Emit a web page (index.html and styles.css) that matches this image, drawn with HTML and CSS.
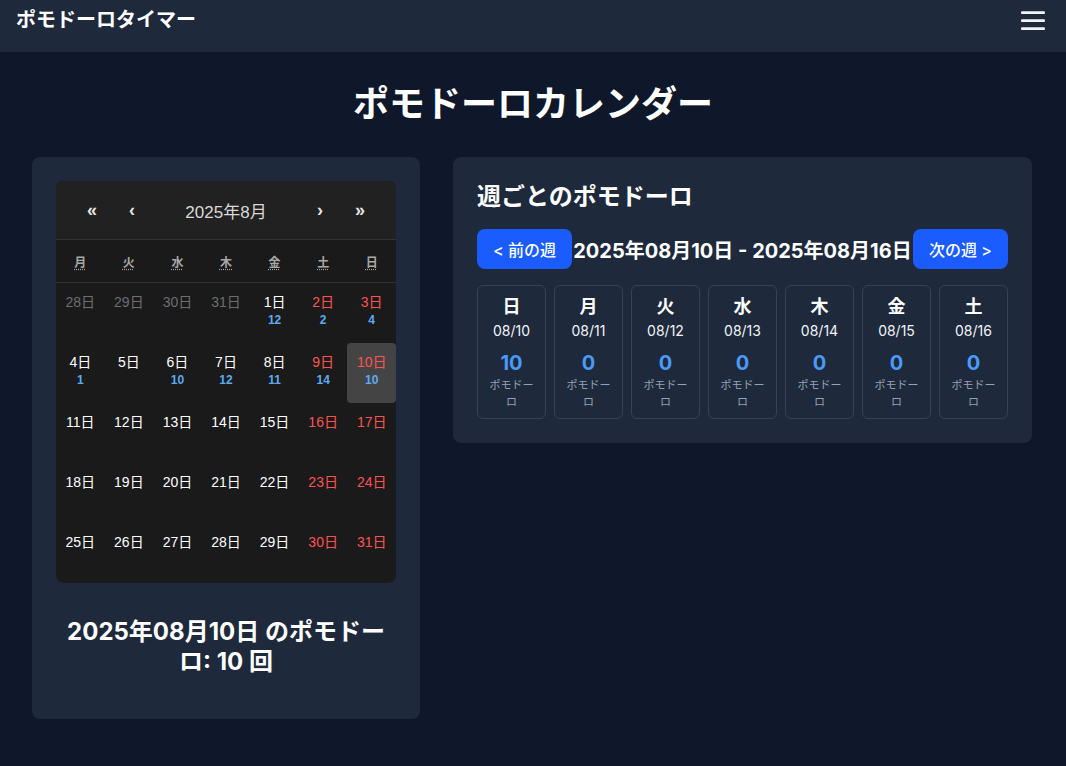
FILE: index.html
```html
<!DOCTYPE html>
<html lang="ja">
<head>
<meta charset="utf-8">
<title>ポモドーロカレンダー</title>
<link rel="stylesheet" href="styles.css">
</head>
<body>
<header class="topbar">
  <h1 class="brand">ポモドーロタイマー</h1>
  <button class="menu" aria-label="メニュー">
    <svg width="24" height="24" viewBox="0 0 24 24" fill="none" stroke="currentColor" stroke-width="2.6" stroke-linecap="round">
      <line x1="1" y1="4.6" x2="23" y2="4.6"/>
      <line x1="1" y1="12.6" x2="23" y2="12.6"/>
      <line x1="1" y1="20.6" x2="23" y2="20.6"/>
    </svg>
  </button>
</header>
<main class="page">
  <h2 class="page-title">ポモドーロカレンダー</h2>
  <div class="layout">
    <section class="card card-left">
      <div class="calendar">
        <div class="cal-nav">
          <button class="cal-arrow">«</button>
          <button class="cal-arrow">‹</button>
          <span class="cal-label">2025年8月</span>
          <button class="cal-arrow">›</button>
          <button class="cal-arrow">»</button>
        </div>
        <div class="cal-weekdays">
          <abbr>月</abbr><abbr>火</abbr><abbr>水</abbr><abbr>木</abbr><abbr>金</abbr><abbr>土</abbr><abbr>日</abbr>
        </div>
        <div class="cal-days">
          <div class="tile other"><span class="d">28日</span></div>
          <div class="tile other"><span class="d">29日</span></div>
          <div class="tile other"><span class="d">30日</span></div>
          <div class="tile other"><span class="d">31日</span></div>
          <div class="tile"><span class="d">1日</span><span class="n">12</span></div>
          <div class="tile weekend"><span class="d">2日</span><span class="n">2</span></div>
          <div class="tile weekend"><span class="d">3日</span><span class="n">4</span></div>

          <div class="tile"><span class="d">4日</span><span class="n">1</span></div>
          <div class="tile"><span class="d">5日</span></div>
          <div class="tile"><span class="d">6日</span><span class="n">10</span></div>
          <div class="tile"><span class="d">7日</span><span class="n">12</span></div>
          <div class="tile"><span class="d">8日</span><span class="n">11</span></div>
          <div class="tile weekend"><span class="d">9日</span><span class="n">14</span></div>
          <div class="tile weekend active"><span class="d">10日</span><span class="n">10</span></div>

          <div class="tile"><span class="d">11日</span></div>
          <div class="tile"><span class="d">12日</span></div>
          <div class="tile"><span class="d">13日</span></div>
          <div class="tile"><span class="d">14日</span></div>
          <div class="tile"><span class="d">15日</span></div>
          <div class="tile weekend"><span class="d">16日</span></div>
          <div class="tile weekend"><span class="d">17日</span></div>

          <div class="tile"><span class="d">18日</span></div>
          <div class="tile"><span class="d">19日</span></div>
          <div class="tile"><span class="d">20日</span></div>
          <div class="tile"><span class="d">21日</span></div>
          <div class="tile"><span class="d">22日</span></div>
          <div class="tile weekend"><span class="d">23日</span></div>
          <div class="tile weekend"><span class="d">24日</span></div>

          <div class="tile"><span class="d">25日</span></div>
          <div class="tile"><span class="d">26日</span></div>
          <div class="tile"><span class="d">27日</span></div>
          <div class="tile"><span class="d">28日</span></div>
          <div class="tile"><span class="d">29日</span></div>
          <div class="tile weekend"><span class="d">30日</span></div>
          <div class="tile weekend"><span class="d">31日</span></div>
        </div>
      </div>
      <p class="day-summary">2025年08月10日 のポモドーロ: 10 回</p>
    </section>

    <section class="card card-right">
      <h3 class="week-title">週ごとのポモドーロ</h3>
      <div class="week-nav">
        <button class="week-btn">&lt; 前の週</button>
        <span class="week-range">2025年08月10日 - 2025年08月16日</span>
        <button class="week-btn">次の週 &gt;</button>
      </div>
      <div class="week-grid">
        <div class="wday"><span class="wname">日</span><span class="wdate">08/10</span><span class="wcount">10</span><span class="wlabel">ポモドーロ</span></div>
        <div class="wday"><span class="wname">月</span><span class="wdate">08/11</span><span class="wcount">0</span><span class="wlabel">ポモドーロ</span></div>
        <div class="wday"><span class="wname">火</span><span class="wdate">08/12</span><span class="wcount">0</span><span class="wlabel">ポモドーロ</span></div>
        <div class="wday"><span class="wname">水</span><span class="wdate">08/13</span><span class="wcount">0</span><span class="wlabel">ポモドーロ</span></div>
        <div class="wday"><span class="wname">木</span><span class="wdate">08/14</span><span class="wcount">0</span><span class="wlabel">ポモドーロ</span></div>
        <div class="wday"><span class="wname">金</span><span class="wdate">08/15</span><span class="wcount">0</span><span class="wlabel">ポモドーロ</span></div>
        <div class="wday"><span class="wname">土</span><span class="wdate">08/16</span><span class="wcount">0</span><span class="wlabel">ポモドーロ</span></div>
      </div>
    </section>
  </div>
</main>
</body>
</html>
```

FILE: styles.css
```css
* { box-sizing: border-box; }

body {
  margin: 0;
  background: #0f172a;
  color: #ffffff;
  font-family: Inter, "Noto Sans CJK JP", sans-serif;
}

button { font-family: inherit; cursor: pointer; }

.topbar {
  height: 52px;
  padding: 8px 21px 8px 16px;
  background: #1e293b;
  display: flex;
  justify-content: space-between;
  align-items: flex-start;
}

.brand {
  margin: 0;
  font-size: 20px;
  line-height: 24px;
  font-weight: 700;
}

.menu {
  width: 24px;
  height: 24px;
  padding: 0;
  border: 0;
  background: none;
  color: #f1f5f9;
  display: block;
}
.menu svg { display: block; }

.page-title {
  margin: 32px 0 33px;
  text-align: center;
  font-size: 36px;
  line-height: 40px;
  font-weight: 700;
}

.layout {
  display: grid;
  grid-template-columns: 388px 579px;
  gap: 33px;
  padding: 0 32px;
  align-items: start;
}

.card {
  background: #1e293b;
  border-radius: 8px;
  padding: 24px;
}

/* Calendar */
.calendar {
  border-radius: 8px;
  background: #1a1a1a;
  overflow: hidden;
  font-family: "Liberation Sans", Arial, "Noto Sans CJK JP", sans-serif;
}

.cal-nav {
  height: 59px;
  padding: 0 16px;
  display: flex;
  align-items: center;
  background: #212121;
  border-bottom: 1px solid #333333;
}

.cal-arrow {
  width: 40px;
  height: 44px;
  border: 0;
  padding: 0;
  background: none;
  color: #e6e6e6;
  font-size: 18px;
  font-weight: 700;
  font-family: "Liberation Sans", Arial, sans-serif;
}

.cal-label {
  flex: 1;
  text-align: center;
  color: #d9d9d9;
  font-size: 17px;
}

.cal-weekdays {
  height: 43px;
  display: grid;
  grid-template-columns: repeat(7, 1fr);
  align-items: center;
  border-bottom: 1px solid #333333;
}

.cal-weekdays abbr {
  text-align: center;
  color: #a8a8a8;
  font-size: 12px;
  font-weight: 700;
  text-decoration: underline dotted;
  text-underline-offset: 2px;
}

.cal-days {
  display: grid;
  grid-template-columns: repeat(7, 1fr);
  grid-auto-rows: 60px;
}

.tile {
  display: flex;
  flex-direction: column;
  align-items: center;
  padding-top: 10px;
  color: #ffffff;
  border-radius: 4px;
}

.tile .d {
  font-size: 14px;
  line-height: 18px;
}

.tile .n {
  margin-top: 2px;
  font-size: 12px;
  line-height: 15px;
  font-weight: 700;
  color: #5eaaf2;
}

.tile.other { color: #6e6e6e; }
.tile.weekend { color: #ff5252; }
.tile.active { background: #444444; }

.day-summary {
  margin: 34px 0 18px;
  padding: 0 6px;
  text-align: center;
  font-size: 24px;
  line-height: 30px;
  font-weight: 700;
}

/* Week */
.week-title {
  margin: 0 0 16px;
  font-size: 24px;
  line-height: 32px;
  font-weight: 700;
}

.week-nav {
  height: 40px;
  margin-bottom: 16px;
  display: flex;
  align-items: center;
  justify-content: space-between;
}

.week-btn {
  height: 40px;
  padding: 0 16px;
  border: 0;
  border-radius: 8px;
  background: #1a5cff;
  color: #ffffff;
  font-size: 16px;
  font-weight: 500;
}

.week-range {
  font-size: 20px;
  font-weight: 700;
  white-space: nowrap;
}

.week-grid {
  display: grid;
  grid-template-columns: repeat(7, 1fr);
  gap: 8px;
}

.wday {
  border: 1px solid #364152;
  border-radius: 6px;
  padding: 7px 8px 7px;
  display: flex;
  flex-direction: column;
  align-items: center;
  text-align: center;
}

.wname {
  font-size: 18px;
  line-height: 28px;
  font-weight: 700;
}

.wdate {
  font-size: 14px;
  line-height: 20px;
  color: #f1f5f9;
}

.wcount {
  margin-top: 8px;
  font-size: 20px;
  line-height: 28px;
  font-weight: 700;
  color: #4a9af8;
}

.wlabel {
  font-size: 11px;
  line-height: 17px;
  color: #94a3b8;
}
```
